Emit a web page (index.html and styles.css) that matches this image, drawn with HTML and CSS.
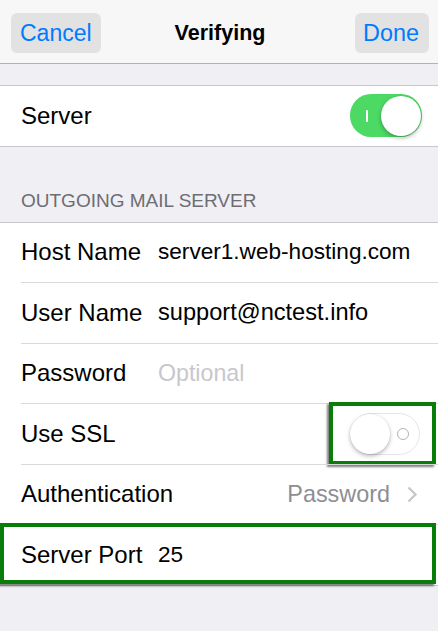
FILE: index.html
```html
<!DOCTYPE html>
<html>
<head>
<meta charset="utf-8">
<link rel="stylesheet" href="styles.css">
</head>
<body>
<header class="navbar">
  <span class="nav-btn nav-cancel">Cancel</span>
  <span class="nav-title">Verifying</span>
  <span class="nav-btn nav-done">Done</span>
</header>

<section class="group group-server">
  <div class="row">
    <div class="row-inner">
      <span class="label">Server</span>
      <span class="toggle toggle-on"><span class="mark-on"></span><span class="knob"></span></span>
    </div>
  </div>
</section>

<div class="section-header">OUTGOING MAIL SERVER</div>

<section class="group">
  <div class="row">
    <div class="row-inner">
      <span class="label">Host Name</span>
      <span class="value value-host">server1.web-hosting.com</span>
    </div>
  </div>
  <div class="row">
    <div class="row-inner">
      <span class="label">User Name</span>
      <span class="value value-user">support@nctest.info</span>
    </div>
  </div>
  <div class="row">
    <div class="row-inner">
      <span class="label">Password</span>
      <span class="value placeholder">Optional</span>
    </div>
  </div>
  <div class="row">
    <div class="row-inner">
      <span class="label">Use SSL</span>
      <span class="highlight-wrap">
        <span class="toggle toggle-off"><span class="knob"></span><span class="mark-off"></span></span>
      </span>
    </div>
  </div>
  <div class="row">
    <div class="row-inner">
      <span class="label label-auth">Authentication</span>
      <span class="detail">Password</span>
      <svg class="chevron" width="11" height="17" viewBox="0 0 11 17"><polyline points="1.5,1.5 8.5,8.5 1.5,15.5" fill="none" stroke="#c7c7cc" stroke-width="2.4"/></svg>
    </div>
  </div>
  <div class="row row-port">
    <div class="row-inner">
      <span class="label">Server Port</span>
      <span class="value">25</span>
    </div>
  </div>
</section>
</body>
</html>
```

FILE: styles.css
```css
html, body {
  margin: 0;
  padding: 0;
}
body {
  background: #efeff4;
  font-family: "Liberation Sans", Arial, sans-serif;
  color: #000;
  width: 438px;
  height: 631px;
  overflow: hidden;
}

.navbar {
  height: 64px;
  box-sizing: border-box;
  background: #f7f7f7;
  border-bottom: 1px solid #b2b2b2;
  display: grid;
  grid-template-columns: 1fr auto 1fr;
  align-items: center;
  padding: 3px 9px 0 11px;
  margin-bottom: 21px;
}
.nav-btn {
  height: 40px;
  line-height: 41px;
  background: #e2e2e2;
  border-radius: 6px;
  color: #007aff;
  font-size: 23px;
  box-sizing: border-box;
}
.nav-cancel {
  justify-self: start;
  width: 90px;
  padding-left: 9px;
}
.nav-done {
  justify-self: end;
  width: 74px;
  padding-left: 8px;
  font-size: 23.4px;
}
.nav-title {
  font-weight: bold;
  font-size: 21.5px;
  margin-top: 1px;
}

.group {
  background: #fff;
  border-top: 1px solid #c8c7cc;
  border-bottom: 1px solid #c8c7cc;
}
.row {
  padding-left: 21px;
  position: relative;
}
.row-inner {
  display: flex;
  align-items: center;
  height: 60.5px;
  box-sizing: border-box;
  border-top: 1px solid #d9d8dc;
  padding-right: 18px;
}
.row:first-child .row-inner {
  border-top: none;
  height: 59.5px;
}
.group-server .row-inner {
  height: 59px;
}

.label {
  font-size: 24px;
  width: 137px;
  flex: none;
  white-space: nowrap;
}
.label-auth {
  width: auto;
}
.value {
  font-size: 22.6px;
  white-space: nowrap;
}
.value-user {
  font-size: 23.6px;
}
.placeholder {
  color: #c7c7cd;
  font-size: 23.2px;
}
.detail {
  margin-left: auto;
  font-size: 23.4px;
  color: #8e8e93;
  margin-right: 17px;
}
.chevron {
  display: block;
  margin-right: 2px;
}

.section-header {
  font-size: 19px;
  line-height: 22px;
  color: #6d6d72;
  padding: 43px 0 10px 21px;
}

/* toggles */
.toggle {
  margin-left: auto;
  display: flex;
  align-items: center;
  width: 70px;
  height: 42px;
  border-radius: 21px;
  box-sizing: border-box;
}
.toggle-on {
  background: #4cd964;
  justify-content: space-between;
  padding: 0 1.5px 0 16px;
  width: 72px;
  height: 43px;
  margin-right: -2px;
}
.mark-on {
  width: 2px;
  height: 12px;
  background: #fff;
  border-radius: 1px;
}
.knob {
  width: 40px;
  height: 40px;
  border-radius: 50%;
  background: #fff;
  box-shadow: 0 2px 4px rgba(0, 0, 0, 0.28), 0 0 0 0.5px rgba(0, 0, 0, 0.06);
}
.toggle-off {
  background: #fff;
  border: 1.5px solid #e6e6e6;
  justify-content: space-between;
  padding: 0 10px 0 0;
}
.toggle-off .knob {
  margin-left: -1px;
}
.mark-off {
  width: 12px;
  height: 12px;
  border-radius: 50%;
  border: 1.6px solid #b3b3b3;
  box-sizing: border-box;
}

/* annotation highlight boxes */
.highlight-wrap {
  margin-left: auto;
  position: relative;
  display: flex;
}
.highlight-wrap::after {
  content: "";
  position: absolute;
  top: -11px;
  bottom: -10px;
  left: -21px;
  right: -16px;
  border: 4px solid #0a7c0a;
  box-shadow: -2px 2px 2px rgba(0, 0, 0, 0.5);
  pointer-events: none;
}
.row-port::after {
  content: "";
  position: absolute;
  top: -1px;
  left: 0;
  right: 2px;
  height: 61px;
  box-sizing: border-box;
  border: 4px solid #0a7c0a;
  box-shadow: -2px 2px 2px rgba(0, 0, 0, 0.5);
  pointer-events: none;
}
```
